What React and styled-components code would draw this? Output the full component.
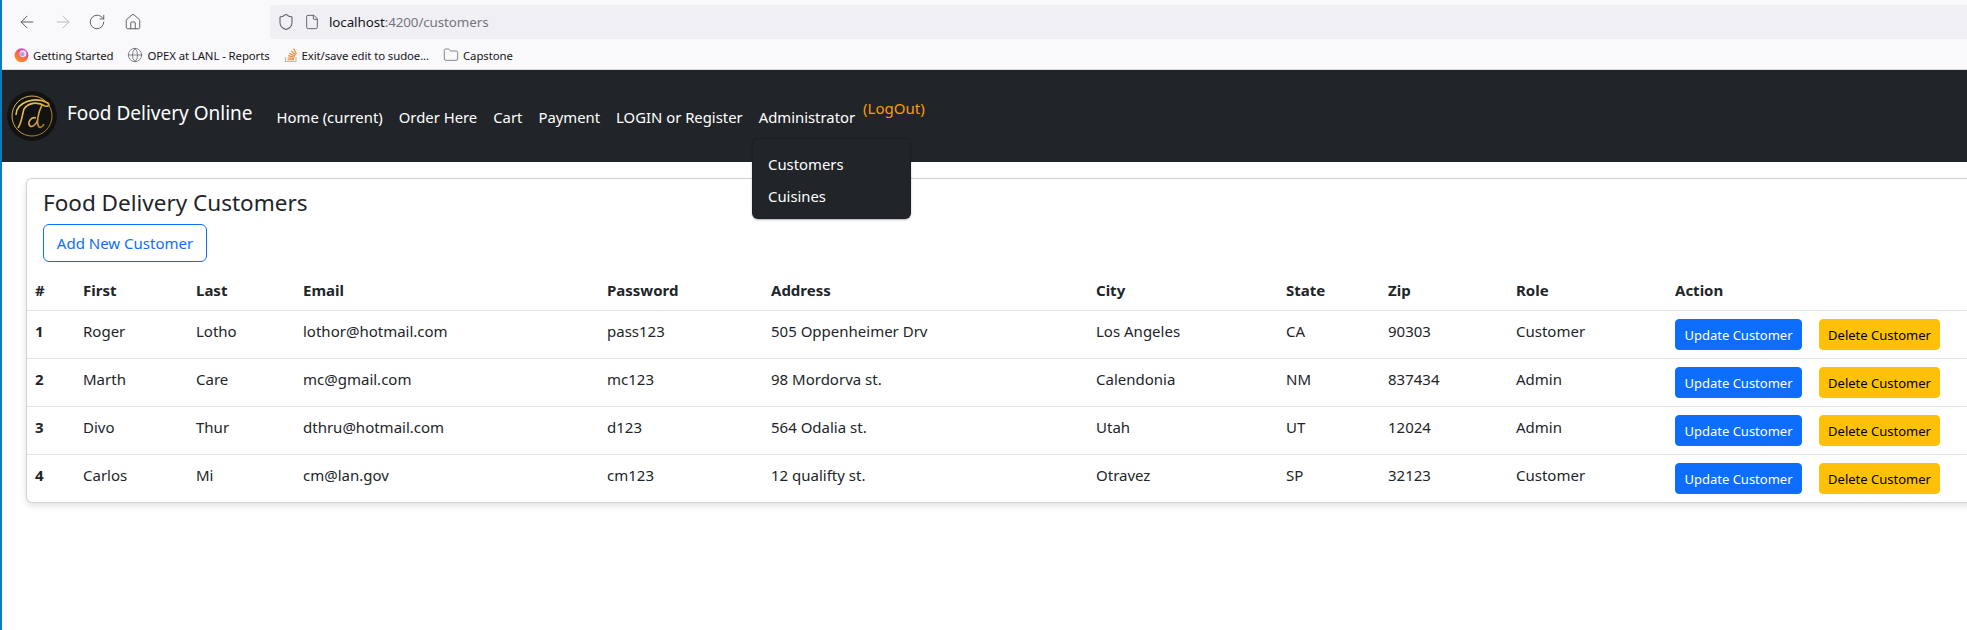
import React from "react";
import styled, { createGlobalStyle } from "styled-components";
import { ArrowLeft, ArrowRight, RotateCw, Home, Shield, File, Globe, Folder } from "lucide-react";

const Global = createGlobalStyle`
  html, body { margin: 0; padding: 0; height: 100%; overflow: hidden; background: #fff; }
  #root { height: 100%; }
  * { box-sizing: border-box; }
`;

const Page = styled.div`
  display: flex;
  width: 1967px;
  height: 630px;
  overflow: hidden;
  font-family: "Noto Sans", "Open Sans", sans-serif;
  color: #212529;
`;
const DesktopStrip = styled.div`
  flex: 0 0 2px;
  background: #0a7cc0;
`;
const Main = styled.div`
  flex: 1;
  min-width: 0;
  display: flex;
  flex-direction: column;
`;

/* Browser chrome */
const Chrome = styled.div`
  height: 70px;
  background: #f9f9fb;
  border-bottom: 1px solid #d8d8dc;
  display: flex;
  flex-direction: column;
`;
const UrlRow = styled.div`
  height: 43px;
  display: flex;
  align-items: center;
  padding: 0 0 0 15px;
`;
const NavIcon = styled.span`
  width: 35.5px;
  display: flex;
  align-items: center;
  color: ${(p) => (p.$off ? "#b9b9bf" : "#5b5b66")};
`;
const UrlBar = styled.div`
  margin-left: 111px;
  flex: 1;
  height: 34px;
  background: #f0f0f4;
  border-radius: 4px 0 0 4px;
  display: flex;
  align-items: center;
  padding-left: 7px;
  color: #5b5b66;
`;
const UrlText = styled.span`
  margin-left: 9px;
  font-size: 13.4px;
  color: #15141a;
  letter-spacing: -0.1px;
`;
const UrlMuted = styled.span`
  color: #75757e;
`;
const ShieldBox = styled.span`
  display: flex;
  width: 27px;
`;
const BookmarkRow = styled.div`
  flex: 1;
  display: flex;
  align-items: center;
  padding: 0 0 2px 12px;
  gap: 14px;
`;
const Bookmark = styled.span`
  display: flex;
  align-items: center;
  gap: 4px;
  font-size: 11.4px;
  color: #15141a;
  white-space: nowrap;
  letter-spacing: -0.1px;
  svg { flex: none; color: #5b5b66; }
`;

/* Navbar */
const Navbar = styled.nav`
  position: relative;
  height: 92px;
  background: #212529;
  display: flex;
  align-items: center;
  padding-left: 5px;
  color: #fff;
`;
const Brand = styled.a`
  display: flex;
  align-items: center;
  gap: 10px;
  font-size: 19px;
  color: #fff;
  margin-right: 24px;
  white-space: nowrap;
`;
const BrandText = styled.span`
  position: relative;
  top: -3px;
`;
const NavLinks = styled.div`
  display: flex;
  align-items: center;
  gap: 16px;
  position: relative;
  top: 1px;
`;
const NavLink = styled.a`
  font-size: 14.85px;
  color: #fff;
  white-space: nowrap;
`;
const LogOut = styled.a`
  font-size: 15px;
  color: #fd9a00;
  margin-left: -8px;
  position: relative;
  top: -9px;
`;
const Dropdown = styled.div`
  position: absolute;
  left: 750px;
  top: 68px;
  width: 159px;
  height: 81px;
  background: #212529;
  border: 1px solid rgba(0, 0, 0, 0.15);
  border-radius: 6px;
  box-shadow: 0 1px 2px rgba(0, 0, 0, 0.3);
  padding: 9px 0;
  z-index: 3;
`;
const DropItem = styled.a`
  display: flex;
  align-items: center;
  height: 32px;
  padding-left: 15px;
  font-size: 14.85px;
  color: #fff;
`;

/* Content */
const Content = styled.div`
  padding: 16px 0 0 24px;
`;
const Card = styled.section`
  width: 2000px;
  height: 325px;
  background: #fff;
  border: 1px solid rgba(0, 0, 0, 0.175);
  border-radius: 6px;
  box-shadow: 0 3px 6px rgba(0, 0, 0, 0.12);
`;
const CardHead = styled.div`
  padding: 6px 16px 0;
`;
const Title = styled.h2`
  margin: 0;
  font-size: 22.5px;
  font-weight: 400;
  line-height: 36px;
  color: #212529;
`;
const AddButton = styled.button`
  display: block;
  margin-top: 3px;
  width: 164px;
  height: 38px;
  padding: 0;
  background: #fff;
  border: 1px solid #0d6efd;
  border-radius: 6px;
  color: #0d6efd;
  font: 400 15px "Noto Sans", sans-serif;
`;
const Table = styled.table`
  table-layout: fixed;
  border-collapse: collapse;
  width: 1944px;
  margin-top: 8px;
  font-size: 15px;
`;
const Col = styled.col`
  width: ${(p) => p.$w}px;
`;
const Th = styled.th`
  height: 40px;
  padding: 0 8px;
  text-align: left;
  font-weight: 700;
  font-size: 15px;
  border-bottom: 1px solid #dee2e6;
  white-space: nowrap;
`;
const Tr = styled.tr`
  &:not(:last-child) td { border-bottom: 1px solid #dee2e6; }
`;
const Td = styled.td`
  height: 48px;
  padding: 0 8px 6px;
  vertical-align: middle;
  white-space: nowrap;
  font-weight: ${(p) => (p.$bold ? 700 : 400)};
`;
const ActionTd = styled(Td)`
  padding: 1px 8px 0;
`;
const ActionButton = styled.button`
  height: 31px;
  width: ${(p) => p.$w}px;
  padding: 0;
  border: 1px solid ${(p) => p.$bg};
  background: ${(p) => p.$bg};
  color: ${(p) => p.$fg};
  border-radius: 4px;
  font: 400 13px "Noto Sans", sans-serif;
  white-space: nowrap;
  vertical-align: middle;
`;

const widths = [48, 113, 107, 304, 164, 325, 190, 102, 128, 159, 144, 160];
const headers = ["#", "First", "Last", "Email", "Password", "Address", "City", "State", "Zip", "Role"];
const rows = [
  ["1", "Roger", "Lotho", "lothor@hotmail.com", "pass123", "505 Oppenheimer Drv", "Los Angeles", "CA", "90303", "Customer"],
  ["2", "Marth", "Care", "mc@gmail.com", "mc123", "98 Mordorva st.", "Calendonia", "NM", "837434", "Admin"],
  ["3", "Divo", "Thur", "dthru@hotmail.com", "d123", "564 Odalia st.", "Utah", "UT", "12024", "Admin"],
  ["4", "Carlos", "Mi", "cm@lan.gov", "cm123", "12 qualifty st.", "Otravez", "SP", "32123", "Customer"],
];

const Logo = () => (
  <svg width="50" height="50" viewBox="0 0 50 50">
    <defs>
      <linearGradient id="gold" x1="0" y1="0" x2="1" y2="1">
        <stop offset="0" stopColor="#f4d675" />
        <stop offset="0.55" stopColor="#d6a63a" />
        <stop offset="1" stopColor="#9a7226" />
      </linearGradient>
    </defs>
    <circle cx="25" cy="25" r="25" fill="#121212" />
    <circle cx="25" cy="25" r="20" fill="none" stroke="url(#gold)" strokeWidth="0.9" />
    <path d="M9 24 C9 11 28 5 41 12 C43 14 41 16 38 15 C30 10 21 12 17 18 C15 24 15 31 11 37" fill="none" stroke="url(#gold)" strokeWidth="1.6" />
    <path d="M13 26 H23" fill="none" stroke="url(#gold)" strokeWidth="1.4" />
    <path d="M29 27 C24 25 20 32 23 35 C26 37 30 32 31 28 M35 14 C31 22 29 32 32 36 C34 37 36 35 37 33" fill="none" stroke="url(#gold)" strokeWidth="1.6" />
  </svg>
);

const FirefoxIcon = () => (
  <svg width="15" height="16" viewBox="0 0 16 16">
    <defs>
      <linearGradient id="ff" x1="0.8" y1="0" x2="0.2" y2="1">
        <stop offset="0" stopColor="#b44ef0" />
        <stop offset="0.45" stopColor="#ff5a5a" />
        <stop offset="1" stopColor="#ff9a1f" />
      </linearGradient>
    </defs>
    <circle cx="8" cy="8.3" r="7.4" fill="url(#ff)" />
    <circle cx="9.5" cy="6.6" r="3.7" fill="#e9e2f8" />
    <circle cx="8.8" cy="7.2" r="2.3" fill="#8a5cf0" opacity="0.55" />
  </svg>
);

const StackIcon = () => (
  <svg width="14" height="16" viewBox="0 0 14 16" fill="none">
    <path d="M1.5 10v4.5h10.5V10" stroke="#bcbbbb" strokeWidth="1.2" />
    <path d="M3.5 12.8h6.5M3.7 10.8l6.3.7M4.3 8.6l6.1 1.6M5.4 6.3l5.6 3M7.3 3.8l4.4 4.2M9.6 1.6l2.9 5.3" stroke="#f48024" strokeWidth="1.1" />
  </svg>
);

export default function App() {
  return (
    <Page>
      <Global />
      <DesktopStrip />
      <Main>
        <Chrome>
          <UrlRow>
            <NavIcon><ArrowLeft size={20} strokeWidth={1.2} /></NavIcon>
            <NavIcon $off><ArrowRight size={20} strokeWidth={1.2} /></NavIcon>
            <NavIcon><RotateCw size={18} strokeWidth={1.3} /></NavIcon>
            <NavIcon><Home size={18} strokeWidth={1.3} /></NavIcon>
            <UrlBar>
              <ShieldBox><Shield size={18} strokeWidth={1.4} /></ShieldBox>
              <File size={16} strokeWidth={1.4} />
              <UrlText>localhost<UrlMuted>:4200/customers</UrlMuted></UrlText>
            </UrlBar>
          </UrlRow>
          <BookmarkRow>
            <Bookmark><FirefoxIcon />Getting Started</Bookmark>
            <Bookmark><Globe size={16} strokeWidth={1.1} />OPEX at LANL - Reports</Bookmark>
            <Bookmark><StackIcon />Exit/save edit to sudoe...</Bookmark>
            <Bookmark><Folder size={16} strokeWidth={1.1} />Capstone</Bookmark>
          </BookmarkRow>
        </Chrome>
        <Navbar>
          <Brand><Logo /><BrandText>Food Delivery Online</BrandText></Brand>
          <NavLinks>
            <NavLink>Home (current)</NavLink>
            <NavLink>Order Here</NavLink>
            <NavLink>Cart</NavLink>
            <NavLink>Payment</NavLink>
            <NavLink>LOGIN or Register</NavLink>
            <NavLink>Administrator</NavLink>
            <LogOut>(LogOut)</LogOut>
          </NavLinks>
          <Dropdown>
            <DropItem>Customers</DropItem>
            <DropItem>Cuisines</DropItem>
          </Dropdown>
        </Navbar>
        <Content>
          <Card>
            <CardHead>
              <Title>Food Delivery Customers</Title>
              <AddButton>Add New Customer</AddButton>
            </CardHead>
            <Table>
              <colgroup>
                {widths.map((w, i) => <Col key={i} $w={w} />)}
              </colgroup>
              <thead>
                <tr>
                  {headers.map((h) => <Th key={h}>{h}</Th>)}
                  <Th colSpan={2}>Action</Th>
                </tr>
              </thead>
              <tbody>
                {rows.map((r) => (
                  <Tr key={r[0]}>
                    {r.map((c, i) => <Td key={i} $bold={i === 0}>{c}</Td>)}
                    <ActionTd><ActionButton $w={127} $bg="#0d6efd" $fg="#fff">Update Customer</ActionButton></ActionTd>
                    <ActionTd><ActionButton $w={121} $bg="#ffc107" $fg="#000">Delete Customer</ActionButton></ActionTd>
                  </Tr>
                ))}
              </tbody>
            </Table>
          </Card>
        </Content>
      </Main>
    </Page>
  );
}
